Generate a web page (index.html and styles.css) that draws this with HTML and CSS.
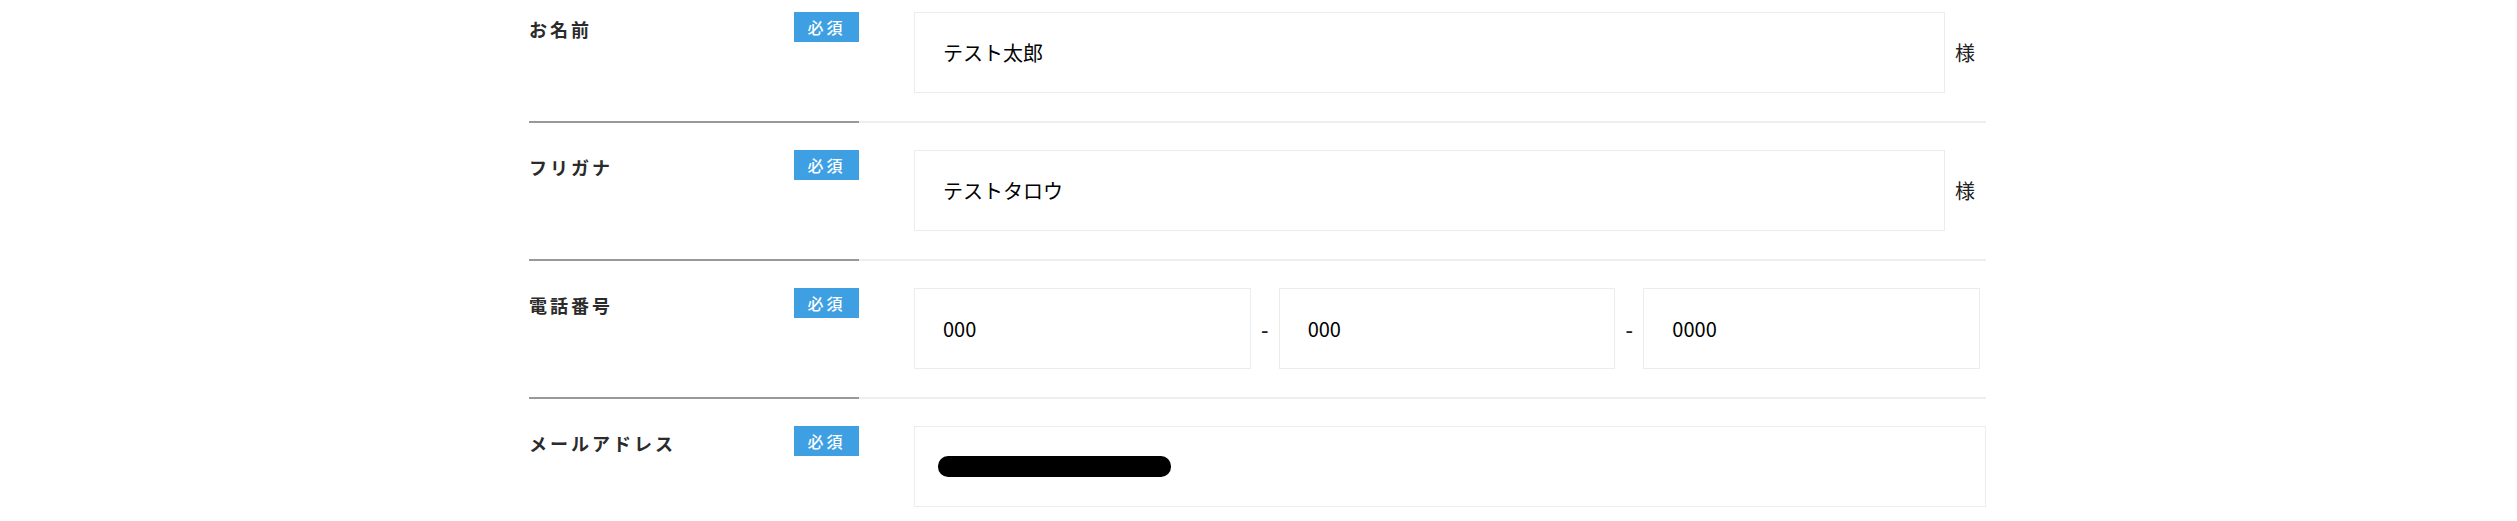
FILE: index.html
```html
<!DOCTYPE html>
<html lang="ja">
<head>
    <meta charset="UTF-8">
    <meta name="viewport" content="width=device-width, initial-scale=1.0">
    <title>お問い合わせフォーム</title>
    <link rel="stylesheet" href="styles.css">
</head>
<body>
    <form class="entry-form">
        <div class="form-row">
            <div class="row-head">
                <label class="row-label" for="name">お名前</label>
                <span class="badge">必須</span>
            </div>
            <div class="row-body">
                <input class="field" type="text" id="name" value="テスト太郎">
                <span class="suffix">様</span>
            </div>
        </div>

        <div class="form-row">
            <div class="row-head">
                <label class="row-label" for="kana">フリガナ</label>
                <span class="badge">必須</span>
            </div>
            <div class="row-body">
                <input class="field" type="text" id="kana" value="テストタロウ">
                <span class="suffix">様</span>
            </div>
        </div>

        <div class="form-row">
            <div class="row-head">
                <label class="row-label" for="tel1">電話番号</label>
                <span class="badge">必須</span>
            </div>
            <div class="row-body">
                <div class="tel-group">
                    <input class="field" type="tel" id="tel1" value="000">
                    <span class="tel-sep">-</span>
                    <input class="field" type="tel" id="tel2" value="000">
                    <span class="tel-sep">-</span>
                    <input class="field" type="tel" id="tel3" value="0000">
                </div>
            </div>
        </div>

        <div class="form-row">
            <div class="row-head">
                <label class="row-label" for="email">メールアドレス</label>
                <span class="badge">必須</span>
            </div>
            <div class="row-body">
                <div class="field-wrap">
                    <input class="field" type="email" id="email" value="">
                    <!-- address blacked out in the capture -->
                    <span class="redact"></span>
                </div>
            </div>
        </div>
    </form>
</body>
</html>
```

FILE: styles.css
```css
body {
    margin: 0;
    background-color: #fff;
    color: #333;
    font-family: "Noto Sans CJK JP", "Noto Sans", sans-serif;
}

.entry-form {
    width: 1459px;
    box-sizing: border-box;
    padding-right: 2px;
    margin: -15px auto 0;
}

.form-row {
    display: flex;
}

.row-head {
    width: 330px;
    flex-shrink: 0;
    display: flex;
    justify-content: space-between;
    align-items: flex-start;
    padding-top: 27px;
    border-bottom: 2px solid #999;
}

.row-label {
    margin-top: 4px;
    font-size: 18px;
    font-weight: bold;
    line-height: 27px;
    letter-spacing: 3px;
    color: #2b2b2b;
}

.badge {
    width: 65px;
    height: 30px;
    line-height: 30px;
    text-align: center;
    background-color: #3f9fe3;
    color: #fff;
    font-size: 16px;
    font-weight: 500;
    letter-spacing: 3px;
}

.row-body {
    flex: 1;
    display: flex;
    align-items: center;
    padding: 27px 0 28px 55px;
    border-bottom: 2px solid #eee;
}

.field {
    flex: 1;
    min-width: 0;
    height: 81px;
    box-sizing: border-box;
    padding: 0 28px;
    border: 1px solid #ececec;
    border-radius: 0;
    background-color: #fff;
    color: #000;
    font-family: "Noto Sans CJK JP", "Noto Sans", sans-serif;
    font-size: 20px;
    outline: none;
}

.suffix {
    margin: 0 11px 0 10px;
    font-size: 20px;
    color: #222;
}

.tel-group {
    flex: 1;
    display: flex;
    align-items: center;
    margin-right: 6px;
}

.tel-sep {
    width: 8px;
    margin: 0 10px;
    text-align: center;
    font-size: 21px;
    font-weight: 500;
    color: #222;
}

.field-wrap {
    flex: 1;
    display: flex;
    position: relative;
}

.redact {
    position: absolute;
    left: 24px;
    top: 30px;
    width: 233px;
    height: 21px;
    border-radius: 10px;
    background-color: #000;
}
```
